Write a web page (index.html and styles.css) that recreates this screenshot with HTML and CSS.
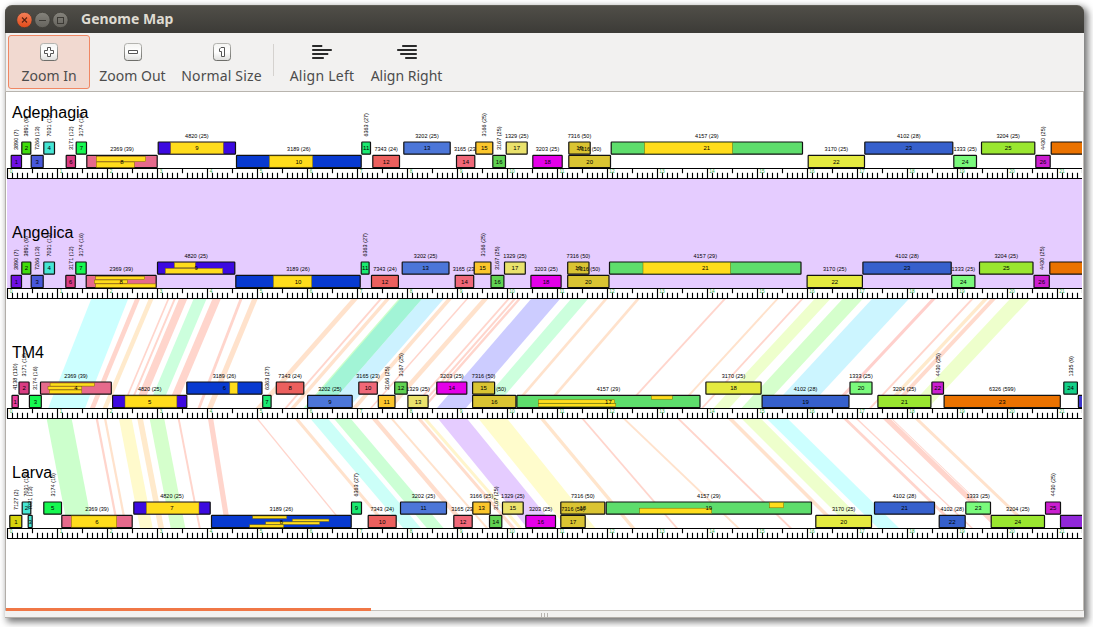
FILE: index.html
```html
<!DOCTYPE html>
<html lang="en">
<head>
<meta charset="utf-8">
<title>Genome Map</title>
<link rel="stylesheet" href="styles.css">
</head>
<body>
<div class="window">
  <header class="titlebar">
    <svg class="controls" width="54" height="18" viewBox="0 0 54 18">
      <defs>
        <linearGradient id="close" x1="0" y1="0" x2="0" y2="1"><stop offset="0" stop-color="#f4805a"/><stop offset="1" stop-color="#e24a18"/></linearGradient>
        <linearGradient id="dim" x1="0" y1="0" x2="0" y2="1"><stop offset="0" stop-color="#85837c"/><stop offset="1" stop-color="#65635d"/></linearGradient>
      </defs>
      <circle cx="9.400" cy="9" r="7.700" fill="url(#close)" stroke="#3b3934" stroke-width=".7"/>
      <path d="M7 6.500l5 5M12 6.500l-5 5" stroke="#5a2210" stroke-width="1.1"/>
      <circle cx="27.400" cy="9" r="7.700" fill="url(#dim)" stroke="#3b3934" stroke-width=".7"/>
      <path d="M24 9.500h7" stroke="#3c3a35" stroke-width="1"/>
      <circle cx="45.400" cy="9" r="7.700" fill="url(#dim)" stroke="#3b3934" stroke-width=".7"/>
      <rect x="42.500" y="6.500" width="6" height="6" fill="none" stroke="#3c3a35" stroke-width="1"/>
    </svg>
    <span class="title">Genome Map</span>
  </header>
  <nav class="toolbar">
    <div class="tool tool-in active">
      <svg width="20" height="20" viewBox="0 0 20 20"><defs><linearGradient id="key" x1="0" y1="0" x2="0" y2="1"><stop offset="0" stop-color="#f4f4f2"/><stop offset=".5" stop-color="#fff"/><stop offset="1" stop-color="#dededc"/></linearGradient><linearGradient id="rim" x1="0" y1="0" x2="0" y2="1"><stop offset="0" stop-color="#b4b4b0"/><stop offset="1" stop-color="#6e6e6a"/></linearGradient></defs><rect class="key" x="1.500" y="1.500" width="17" height="17" rx="2.800"/><path class="mark" d="M8.500 5.500h3v3h3v3h-3v3h-3v-3h-3v-3h3z"/></svg>
      <span>Zoom In</span>
    </div>
    <div class="tool tool-out">
      <svg width="20" height="20" viewBox="0 0 20 20"><rect class="key" x="1.500" y="1.500" width="17" height="17" rx="2.800"/><path class="mark" d="M5.500 8.500h9v3h-9z"/></svg>
      <span>Zoom Out</span>
    </div>
    <div class="tool tool-normal">
      <svg width="20" height="20" viewBox="0 0 20 20"><rect class="key" x="1.500" y="1.500" width="17" height="17" rx="2.800"/><path class="mark" d="M9 5.500h3.500v9h-3v-5h-2v-2.500z"/></svg>
      <span>Normal Size</span>
    </div>
    <i class="divider"></i>
    <div class="tool tool-left">
      <svg width="20" height="20" viewBox="0 0 20 20"><defs><linearGradient id="bar" gradientUnits="userSpaceOnUse" x1="0" y1="0" x2="20" y2="0"><stop offset="0" stop-color="#333"/><stop offset="1" stop-color="#aaa"/></linearGradient></defs><g class="bars"><path d="M.5 3.500h9.500v1H.5zM.5 7.500h19v1H.5zM.5 11.500h15.500v1H.5zM.5 15.500h11v1H.5z"/></g></svg>
      <span>Align Left</span>
    </div>
    <div class="tool tool-right">
      <svg width="20" height="20" viewBox="0 0 20 20"><g class="bars"><path d="M5.500 3.500h14v1h-14zM.5 7.500h19v1H.5zM3.500 11.500h16v1h-16zM8.500 15.500h11v1h-11z"/></g></svg>
      <span>Align Right</span>
    </div>
  </nav>
  <main class="map">
    <svg id="canvas" width="1076" height="518" viewBox="6 92 1076 518"></svg>
  </main>
  <footer class="status">
    <div class="progress"></div>
    <div class="grip"><i></i><i></i><i></i></div>
  </footer>
</div>
<script src="map.js"></script>
</body>
</html>
```
FILE: styles.css
```css
html, body { height: 100%; }
body {
  margin: 0;
  padding: 5px 9px 9px 5px;
  box-sizing: border-box;
  overflow: hidden;
  background: #fff;
  font-family: "Noto Sans", "Open Sans", sans-serif;
}
.window {
  display: flex;
  flex-direction: column;
  width: 1079px;
  height: 613px;
  border-radius: 7px 7px 0 0;
  background: #f2f1f0;
  box-shadow: 3px 3px 7px 1px rgba(0, 0, 0, .55);
}
.titlebar {
  flex: none;
  display: flex;
  align-items: center;
  gap: 12px;
  height: 28px;
  box-sizing: border-box;
  padding-left: 10px;
  border-top: 1px solid #5f5d56;
  border-radius: 7px 7px 0 0;
  background: linear-gradient(#504e48, #3c3b37);
}
.controls { display: block; }
.title {
  color: #dfdbd2;
  font-size: 14px;
  font-weight: 700;
  line-height: 20px;
  padding-bottom: 2px;
  white-space: nowrap;
}
.toolbar {
  flex: none;
  display: flex;
  height: 59px;
  box-sizing: border-box;
  padding: 2px 0 2px 2px;
  border-bottom: 1px solid #b8b4ae;
  border-left: 1px solid #c4c0bb;
  background: #f2f1f0;
}
.tool {
  display: flex;
  flex-direction: column;
  align-items: center;
  box-sizing: border-box;
  height: 54px;
  padding-top: 6px;
  border: 1px solid transparent;
  border-radius: 3px;
  color: #4c4c4c;
  font-size: 14px;
  line-height: 20px;
  white-space: nowrap;
}
.tool svg { flex: none; display: block; margin-bottom: 4px; }
.tool.active { border-color: #f08763; background: #f1d9d0; }
.tool-in { width: 82px; }
.tool-out { width: 85px; }
.tool-normal { width: 93px; letter-spacing: .15px; }
.tool-left { width: 84px; margin-left: 6px; letter-spacing: .25px; }
.tool-right { width: 85px; }
.divider { width: 1px; height: 32px; margin: 9px 0 0 5px; background: #d5d2cf; }
.key { fill: url(#key); stroke: url(#rim); }
.mark { fill: #fff; stroke: #555; }
.bars { fill: url(#bar); stroke: #2a2a2a; }
.map {
  flex: none;
  height: 518px;
  box-sizing: border-box;
  border-left: 1px solid #b2aea9;
  border-right: 1px solid #c0bcb7;
  background: #fff;
}
.map svg { display: block; }
.map text { font-family: "Liberation Sans", Arial, sans-serif; }
.name { font-size: 16px; }
.label { font-size: 6px; fill: #000; }
.num { font-size: 6px; fill: #000; text-anchor: middle; }
.scale { font-size: 4.8px; fill: #2fae48; text-anchor: middle; }
.gene { stroke: #111; stroke-width: 1.2; }
.domain { fill: #ffdc1c; stroke: #7a6800; stroke-width: .5; }
.status {
  flex: 1;
  display: flex;
  justify-content: center;
  position: relative;
  box-sizing: border-box;
  border-top: 1px solid #c4c0bb;
  border-bottom: 1px solid #b2aea9;
}
.progress {
  position: absolute;
  left: 1px;
  top: -3px;
  width: 365px;
  height: 3px;
  background: #f07746;
}
.grip { display: flex; gap: 2px; padding-top: 2px; }
.grip i { width: 1px; height: 4px; background: #b8b4b0; }
```
FILE: map.js
```js
const C = {
  violet: "#6f10e2", lime: "#3fdc0c", slate: "#4858da", aqua: "#46e6d4", rose: "#d93c82",
  spring: "#16f850", pink: "#e66a8c", indigo: "#3c0ae0", blue: "#083ad0", mint: "#1aea70",
  red: "#ec605e", steel: "#4c76d8", coral: "#f06878", amber: "#fbc62c", green: "#60d252",
  cream: "#eae26c", magenta: "#e400e8", gold: "#dac432", fern: "#5edd6c", lemon: "#e4ea40",
  royal: "#3660cc", pale: "#7afa7c", leaf: "#9ae630", plum: "#cb1ed0", orange: "#ea7200",
  hot: "#e83c9c", teal: "#14d088", navy: "#3c34cc", olive: "#d6d40e", purple: "#9028d8"
};
// [number, x1, x2, lane (0 upper, 1 lower), colour, label, vertical, domains [x1, x2, y1, y2]]
const tracks = [
  { name: "Adephagia", genes: [
    [1,10.7,22,1,"violet","3890 (7)",1],[2,21.3,31.3,0,"lime","3891 (9)",1],[3,30.7,43.7,1,"slate","7266 (13)",1],
    [4,43.3,55,0,"aqua","7031 (13)",1],[6,65.7,76,1,"rose","3171 (12)",1],[7,75.7,87,0,"spring","3174 (16)",1],
    [8,86.3,157.7,1,"pink","2369 (39)",0,[[96.3,145.7,1,6.3],[96.3,134.3,6.6,12.2]]],
    [9,157.7,236,0,"indigo","4820 (25)",0,[[170.7,223.3,.5,12]]],
    [10,236,361.7,1,"blue","3189 (26)",0,[[269.3,312.7,.5,12]]],
    [11,361.3,371,0,"mint","6363 (27)",1],[12,372.3,400,1,"red","7343 (24)"],[13,403.3,450.7,0,"steel","3202 (25)"],
    [14,456,475.3,1,"coral","3165 (23)"],[15,475.3,493.3,0,"amber","3166 (25)",1],[16,492.3,506,1,"green","3167 (25)",1],
    [17,505.7,527.7,0,"cream","1329 (25)"],[18,532.3,562.7,1,"magenta","3203 (25)"],[19,568.3,590.7,0,"gold","7316 (50)"],
    [20,568.3,611,1,"gold","7316 (50)"],[21,610.7,803,0,"fern","4157 (29)",0,[[644.7,732.3,.5,12]]],
    [22,807.7,865,1,"lemon","3170 (25)"],[23,864.3,953.3,0,"royal","4102 (28)"],[24,953.3,977,1,"pale","1333 (25)"],
    [25,981,1035.3,0,"leaf","3204 (25)"],[26,1035.3,1050.7,1,"plum","4430 (25)",1],["",1050.7,1150,0,"orange",""]] },
  { name: "Angelica", genes: [
    [1,10.7,22,1,"violet","3890 (7)",1],[2,21.3,31.3,0,"lime","3891 (9)",1],[3,30.7,43.7,1,"slate","7266 (13)",1],
    [4,43.3,55,0,"aqua","7031 (13)",1],[6,65.3,75.7,1,"rose","3171 (12)",1],[7,75.3,86.7,0,"spring","3174 (16)",1],
    [8,85.7,156.7,1,"pink","2369 (39)",0,[[95.7,144.7,1,4.3],[94.3,127.3,4.6,8.2],[95.7,155.7,8.5,12.2]]],
    [9,157,235.3,0,"indigo","4820 (25)",0,[[174.3,195.3,.6,6],[165.3,222.7,6.3,11.7]]],
    [10,235.3,360.7,1,"blue","3189 (26)",0,[[273.3,311.7,.5,12]]],
    [11,360.7,369.6,0,"mint","6363 (27)",1],[12,371,398.9,1,"red","7343 (24)"],[13,401.7,449.5,0,"steel","3202 (25)"],
    [14,454.7,474.2,1,"coral","3165 (23)"],[15,473.7,491.4,0,"amber","3166 (25)",1],[16,490.5,504.4,1,"green","3167 (25)",1],
    [17,504,525.8,0,"cream","1329 (25)"],[18,530.4,561.6,1,"magenta","3203 (25)"],[19,567.2,589.5,0,"gold","7316 (50)"],
    [20,567.2,609.5,1,"gold","7316 (50)"],[21,609,801.5,0,"fern","4157 (29)",0,[[643,730.3,.5,12]]],
    [22,806.6,862.9,1,"lemon","3170 (25)"],[23,862.4,951.7,0,"royal","4102 (28)"],[24,951.2,975.4,1,"pale","1333 (25)"],
    [25,979,1033.5,0,"leaf","3204 (25)"],[26,1033.5,1049.8,1,"plum","4430 (25)",1],["",1049.3,1150,0,"orange",""]] },
  { name: "TM4", genes: [
    [1,11.5,18.8,1,"hot","4138 (110)",1],[2,18.5,29.6,0,"rose","3171 (12)",1],[3,28.9,41.8,1,"spring","3174 (16)",1],
    [4,40,111.8,0,"pink","2369 (39)",0,[[50.1,94.4,1,4.3],[48,81.8,4.6,7.8],[49.4,81.8,8,11.5]]],
    [5,112.1,187.3,1,"indigo","4820 (25)",0,[[125,176.9,.5,12]]],
    [6,186.3,262.5,0,"blue","3189 (26)",0,[[229.8,237.5,.5,12]]],
    [7,262.2,271.6,1,"mint","6363 (27)",1],[8,275.8,304.3,0,"red","7343 (24)"],[9,307.1,352.7,1,"steel","3202 (25)"],
    [10,358.3,377.8,0,"coral","3165 (23)"],[11,377.8,395.5,1,"amber","3166 (25)",1],[13,407.4,428.6,1,"cream","1329 (25)"],
    [12,394.2,407.7,0,"green","3167 (25)",1],[14,436.3,467.3,0,"magenta","3203 (25)"],[16,472.1,516.4,1,"gold","7316 (50)"],
    [15,472.1,495.1,0,"gold","7316 (50)"],
    [17,516.4,700.5,1,"fern","4157 (29)",0,[[538.3,614.7,4.4,8],[538.3,615.8,8.3,11.5],[651.3,672.3,.5,4]]],
    [18,705.4,761.6,0,"lemon","3170 (25)"],[19,761.6,849.5,1,"royal","4102 (28)"],[20,849.5,872.5,0,"pale","1333 (25)"],
    [21,877.4,931.4,1,"leaf","3204 (25)"],[22,931.4,944,0,"plum","4430 (25)",1],[23,943.6,1060.8,1,"orange","6326 (599)"],
    [24,1063.3,1077.9,0,"teal","1335 (9)",1],["",1077.9,1150,1,"navy",""]] },
  { name: "Larva", genes: [
    [1,9.3,22.3,1,"olive","7127 (2)",1],[2,21.7,31.3,0,"aqua","7031 (13)",1],[3,27.7,32.7,1,"aqua","7031 (13)",1],
    [5,43.3,62,0,"spring","3174 (16)",1],[6,61.3,132.7,1,"pink","2369 (39)",0,[[71.3,116.7,.5,12]]],
    [7,133.3,210.7,0,"indigo","4820 (25)",0,[[146.3,199,.5,12]]],
    [8,211,351.7,1,"blue","3189 (26)",0,[[252.7,286.7,.6,3.3],[292.3,329,3.7,6.2],[265.7,319.7,6.5,9.2],[249.7,283.7,9.4,12]]],
    [9,351,362,0,"mint","6363 (27)",1],[10,367.7,396.7,1,"red","7343 (24)"],[11,400,447,0,"steel","3202 (25)"],
    [12,453.3,472.7,1,"coral","3165 (23)"],[13,472.3,490.7,0,"amber","3166 (25)"],[14,489,502.3,1,"green","3167 (25)",1],
    [15,502,523.7,0,"cream","1329 (25)"],[16,525.3,556,1,"magenta","3203 (25)"],[18,560.3,605.3,0,"gold","7316 (50)"],
    [17,560.3,585.7,1,"gold","7316 (50)"],
    [19,605.7,812,0,"fern","4157 (29)",0,[[639.7,711.7,6.2,11.6],[769.3,783.7,.5,6]]],
    [20,815.3,872,1,"lemon","3170 (25)"],[21,874,935,0,"royal","4102 (28)"],[22,938.7,965.7,1,"royal","4102 (28)"],
    [23,965.3,991,0,"pale","1333 (25)"],[24,990.7,1045,1,"leaf","3204 (25)"],[25,1045,1061,0,"plum","4430 (25)",1],
    ["",1060,1150,1,"purple",""]] }
];
// [left, right, horizontal shift to the lower track, colour]
const P = "#ffd5cc", O = "#ffe2cc", Y = "#ffeacc";
const links = [
  { y: 299, list: [
    [91.2,128.1,-43,"#ccffff"],[135,140,-45,P],[148.7,153.5,-46,Y],[167.5,169.3,-46,P],[173.7,175.8,-46,P],
    [179,187.3,-46,P],[193.6,206.5,-46,"#ccffdd"],[212.4,220.8,-46,P],[239.5,242.5,-42,P],[252,257.7,-45,O],
    [351.7,358,-96,O],[379.5,382,-95,P],[385.5,390,-95,O],[398.6,402,-95,"#ccffcc"],[422,443.6,-95,"#ccf2ff"],
    [400.4,422,-95,"#a2f4d6"],[447,452,-95,O],[466,468,-96,P],[482.2,488.2,-96,O],[507.3,509.7,-96,P],
    [513.2,516,-96,P],[517.8,520.9,-96,P],[531,560,-94,"#ccccff"],[571,588,-94,"#ccffdd"],[604.2,607.7,-94,O],
    [636.3,639.8,-94,O],[723.5,726,-100,P],[776,778.6,-100,O],[801,803.4,-100,P],[814.6,830.3,-101,"#eeffcc"],
    [842.5,862.7,-101,"#d5ffcc"],[872,908.8,-101,"#ccf5ff"],[931.4,935.6,-102,"#ffd0cc"],[971,973.6,-102,P],
    [983.4,988,-102,Y],[990.7,996,-102,"#ffdacc"],[1010,1030,-102,"#eeffcc"]] },
  { y: 419, list: [
    [46.7,71.7,21,"#ccffcc"],[95.7,98,21,P],[104,106.3,21,O],[119,131.7,21,"#fffacc"],[137.3,143,21,Y],
    [149.7,164.3,21,"#d5ffcc"],[177.7,179.7,21,P],[208,213.3,17.5,P],[256.7,258.4,89,P],[294.7,298.7,92,O],
    [310.7,328.3,92.5,"#ccfff8"],[334.3,351,92.5,"#ccffd5"],[371.7,377.3,93,"#ffddcc"],[390.7,393.3,95,O],
    [417.3,421.3,94,"#ffddcc"],[423.3,427.3,95,"#fff5cc"],[438.3,467.3,89,"#e5ccff"],[478.7,507.3,88,"#fffccc"],
    [540,544.3,91,"#ffe5cc"],[581.7,584,94,P],[623,625.7,114,O],[677.3,680,112,P],[728,733,109,O],
    [742,761.3,109,"#eeffcc"],[767,788,111,"#ccffff"],[843.3,847.3,113,P],[856,858,115,P],[883,890.7,113,P],
    [891.5,892.7,113,P],[914.7,919,114,O]] }
];
const out = [];
const text = (cls, x, y, s, extra = "") => out.push(`<text class="${cls}" x="${x}" y="${y}" ${extra}>${s}</text>`);
const labelWidth = s => [...s].reduce((w, c) => w + (c === " " ? .278 : /\d/.test(c) ? .556 : .333), 0) * 5.5;

out.push(`<rect x="7" y="179" width="1080" height="120" fill="#e5ccff"/>`);
for (const { y, list } of links)
  for (const [a, b, s, c] of list)
    out.push(`<path fill="${c}" d="M${a} ${y}H${b}L${b + s} ${y + 109}H${a + s}z"/>`);

tracks.forEach((t, i) => {
  const dy = i * 120;
  const top = 168 + dy;
  text("name", 12, 118 + dy, t.name);
  for (const [n, a, b, lane, c, label, vertical, domains] of t.genes) {
    const y = (lane ? 155.4 : 142) + dy;
    const mid = (a + b) / 2;
    out.push(`<rect class="gene" x="${a + .5}" y="${y}" width="${b - a - 1}" height="12.2" rx=".6" fill="${C[c]}"/>`);
    for (const [l, r, t1, t2] of domains || [])
      out.push(`<rect class="domain" x="${l}" y="${y + t1}" width="${r - l}" height="${t2 - t1 - .2}"/>`);
    if (n) text("num", mid, y + 8.2, n);
    if (label) {
      const w = labelWidth(label);
      const fit = `textLength="${w}" lengthAdjust="spacingAndGlyphs"`;
      if (vertical) {
        const by = y - 5.4;
        text("label", mid + 2, by, label, `${fit} transform="rotate(-90 ${mid + 2} ${by})"`);
      } else text("label", mid - w / 2, y - 4.2, label, fit);
    }
  }
  out.push(`<rect x="7" y="${top}" width="1080" height="11" fill="#fff"/>`);
  let ticks = "";
  for (let k = 0; k <= 215; k++) {
    const x = 7.5 + 5 * k;
    ticks += k % 10 === 0 ? `M${x} ${top}v10` : k % 5 === 0 ? `M${x} ${top}v5.3` : `M${x} ${top + 4.7}v5.3`;
    if (k % 10 === 0) text("scale", x + (k < 100 ? 3.5 : 4.5), top + 4.5, k / 10);
  }
  out.push(`<path d="${ticks}M7 ${top + .5}H1087M7 ${top + 10.5}H1087" stroke="#000" stroke-width="1.15" fill="none"/>`);
});
document.getElementById("canvas").innerHTML = out.join("");
```
